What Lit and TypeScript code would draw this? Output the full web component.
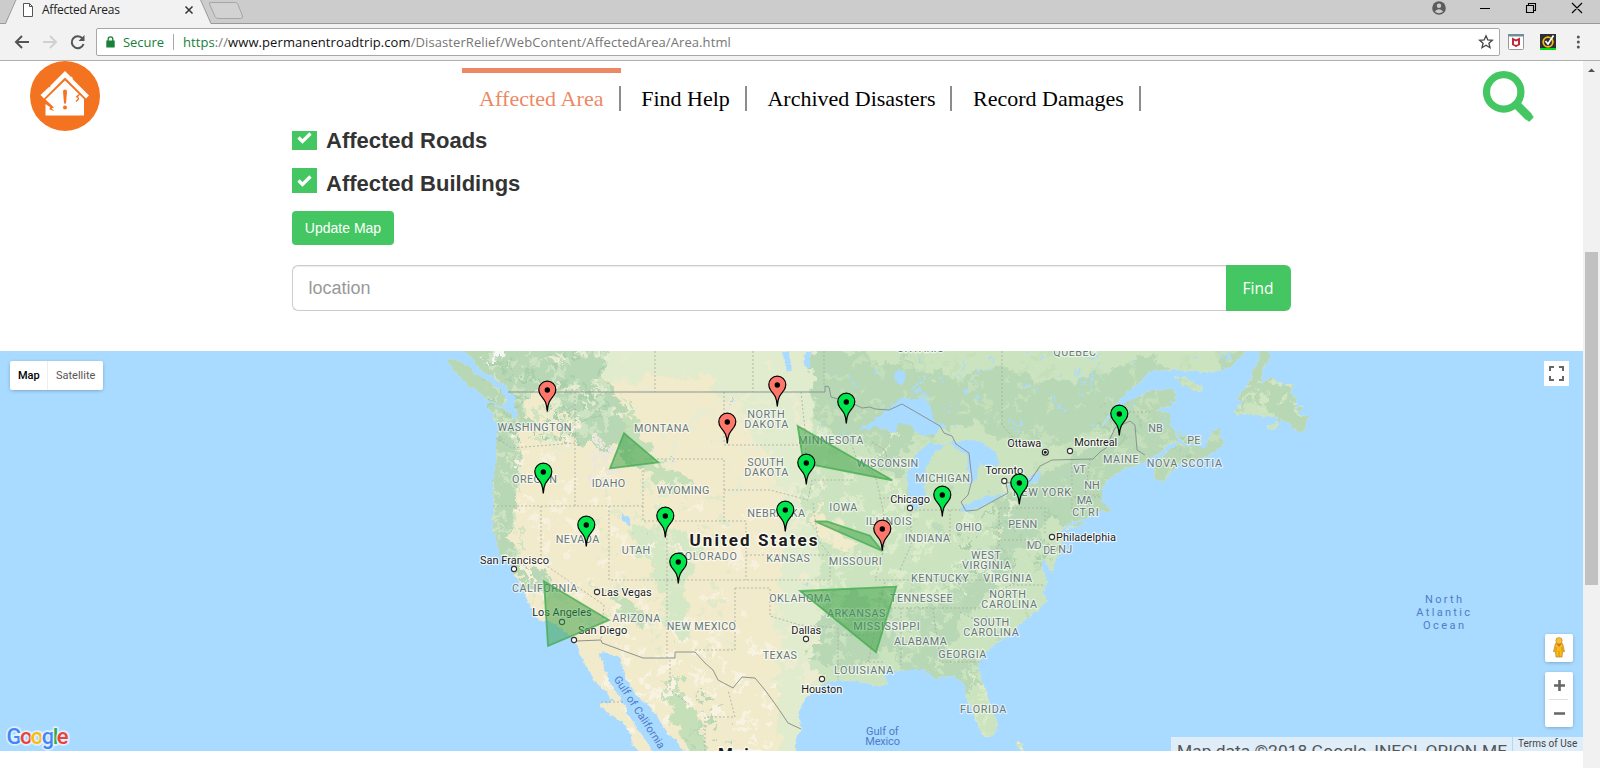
import { LitElement, html, svg, css } from "lit";
import { customElement } from "lit/decorators.js";

type Label = [string, number, number, number];

/* text, left, right, baseline */
const STATES: Label[] = [
  ["WASHINGTON", 497.5, 571.5, 430.7], ["OREGON", 512, 557, 482.7], ["IDAHO", 591.7, 625.3, 486.7],
  ["MONTANA", 634, 689, 431.7], ["WYOMING", 656.7, 709.3, 494.3], ["NEVADA", 555.7, 599.3, 543.3],
  ["UTAH", 621.7, 650.3, 553.7], ["COLORADO", 677, 737, 559.7], ["NORTH", 747.3, 784.7, 418.3],
  ["DAKOTA", 744.3, 788.3, 428.3], ["MINNESOTA", 798.3, 863.3, 443.7], ["SOUTH", 747.3, 783.7, 466.3],
  ["DAKOTA", 744.3, 788.3, 476.3], ["WISCONSIN", 856.7, 918.3, 467.3], ["MICHIGAN", 915.3, 970, 482.3],
  ["IOWA", 829.3, 857.3, 510.7], ["NEBRASKA", 747.3, 805, 517.3], ["ILLINOIS", 865.7, 911.7, 525.3],
  ["OHIO", 955.3, 982, 531.3], ["INDIANA", 904.7, 950, 542.3], ["NEW YORK", 1013, 1071, 496.3],
  ["PENN", 1008.3, 1037.3, 527.7], ["MD", 1026.7, 1041.7, 549.3], ["DE", 1043.3, 1056, 554.3],
  ["NJ", 1058.3, 1072.3, 552.7], ["MAINE", 1103, 1138.7, 463.3], ["VT", 1073.3, 1086, 472.7],
  ["NH", 1084.3, 1099.7, 488.7], ["MA", 1076.7, 1092.3, 504.3], ["CT", 1072.3, 1086, 516.3], ["RI", 1088, 1098.7, 516.3],
  ["NB", 1148.3, 1162.7, 431.7], ["PE", 1187.3, 1200.3, 444], ["NOVA SCOTIA", 1146.7, 1222, 467.3],
  ["QUEBEC", 1053.3, 1096, 355.7], ["ONTARIO", 896.7, 944.3, 352], ["CALIFORNIA", 512, 577.3, 591.7],
  ["ARIZONA", 612.3, 660.3, 621.7], ["NEW MEXICO", 666.7, 736, 629.7], ["KANSAS", 766.3, 810, 562.3],
  ["MISSOURI", 828.7, 881.7, 565.3], ["WEST", 971, 1000.7, 558.7], ["VIRGINIA", 962, 1010.7, 568.7],
  ["KENTUCKY", 911, 968.7, 581.7], ["VIRGINIA", 983.3, 1032, 581.7], ["OKLAHOMA", 769.3, 830.7, 602.3],
  ["TENNESSEE", 890, 952.7, 602.3], ["NORTH", 989.3, 1026, 598.3], ["CAROLINA", 981.3, 1037, 608.3],
  ["ARKANSAS", 827, 885.3, 616.7], ["MISSISSIPPI", 853.3, 919.7, 630.3], ["SOUTH", 973.3, 1009.3, 626.3],
  ["CAROLINA", 963.3, 1018.7, 636.3], ["ALABAMA", 894, 946.7, 645.3], ["GEORGIA", 938.3, 986.3, 658.3],
  ["TEXAS", 762.7, 797, 659.3], ["LOUISIANA", 834, 893.3, 674.3], ["FLORIDA", 960, 1006.3, 713.3],
];

const CITIES: Label[] = [
  ["Chicago", 890.2, 930, 502.7], ["Toronto", 985.3, 1023.3, 474.3], ["Ottawa", 1007.3, 1041.3, 446.7],
  ["Montreal", 1074.2, 1117.3, 445.7], ["Philadelphia", 1056, 1116, 540.7], ["San Francisco", 480, 549, 563.7],
  ["Las Vegas", 601.2, 651.7, 595.7], ["Los Angeles", 532.2, 591.7, 616], ["San Diego", 578, 627.3, 634],
  ["Dallas", 791.2, 821.3, 633.7], ["Houston", 801.2, 842.3, 692.7],
];

const WATERS: Label[] = [
  ["Gulf of", 866, 898.7, 734.6], ["Mexico", 865.2, 900, 744.8],
  ["North", 1425, 1462, 603], ["Atlantic", 1416.3, 1470, 616], ["Ocean", 1423, 1464, 629],
];

const DOTS = [[910, 508], [1004.3, 481], [1070, 451], [1052, 537], [514, 569], [597, 592], [562, 622], [574, 640], [806, 639], [822, 679]];

const RED = "#ff776b";
const GREEN = "#00e64d";
const PINS: [number, number, string][] = [
  [777.3, 407, RED], [547.3, 412, RED], [846.3, 424, GREEN], [1119.3, 436, GREEN], [727.3, 444, RED],
  [806.3, 485, GREEN], [543.3, 494, GREEN], [1019.3, 505, GREEN], [942.3, 517, GREEN], [785.3, 532, GREEN],
  [665.3, 538, GREEN], [586.3, 547, GREEN], [882.3, 551, RED], [678.3, 584, GREEN],
];

const ZONES = [
  "624,433.3 658.3,462.3 610,468.3",
  "797.7,426 892.3,480.3 803.5,463",
  "814.7,521.3 827,521.5 870,535.7 882.3,551",
  "544,581.3 609,620 548,646",
  "800.3,591 896.3,586.7 876,652.3",
];

const MAINLAND =
  "M453,345 473,358 480,370 493,377 507,388 514,398 517,420 511,415 503,408 487,403 493,415 498,428 497,448 495,465 493,488 494,506 492,525 497,545 500,555 513,565 513,573 518,580 523,592 530,605 533,612 540,620 553,622 560,627 570,635 577,645 582,658 590,672 593,680 607,692 613,702 608,703 600,705 610,715 623,722 630,735 633,745 643,755 655,755 647,742 637,728 627,712 617,692 607,678 602,662 598,652 607,653 620,658 625,678 637,695 647,705 657,715 663,728 677,742 687,755 795,755 797,737 802,728 798,715 802,702 813,692 823,683 837,680 853,681 870,684 880,687 888,683 887,677 880,673 893,671 910,670 923,670 937,678 953,675 963,683 967,698 975,718 983,735 990,738 995,732 996,718 988,698 982,682 978,668 983,655 997,642 1013,632 1023,622 1030,615 1040,610 1046,601 1043,592 1047,580 1043,570 1042,556 1047,563 1052,573 1055,562 1061,552 1063,543 1061,532 1068,523 1080,519 1092,517 1099,511 1110,512 1108,506 1102,502 1102,492 1104,484 1112,476 1127,468 1143,463 1158,453 1170,444 1178,442 1175,432 1170,425 1170,413 1155,410 1163,407 1173,406 1177,395 1170,389 1153,390 1130,400 1113,413 1102,428 1106,416 1123,396 1140,382 1150,371 1180,370 1207,372 1223,370 1233,365 1243,355 1252,345Z";
const ISLANDS = [
  "M446,360 455,359 467,366 482,378 500,389 508,400 502,407 488,400 470,386 457,374Z",
  "M1168,450 1178,444 1197,447 1207,447 1212,432 1220,427 1220,438 1225,442 1213,453 1197,461 1177,465 1163,481 1155,479 1153,469 1160,459Z",
  "M1177,428 1182,434 1190,437 1201,438 1204,442 1190,444 1180,440Z",
  "M1173,376 1187,378 1203,388 1198,391 1185,386Z",
  "M1263,345 1271,355 1263,370 1260,385 1272,376 1276,382 1284,384 1294,384 1289,393 1297,398 1294,409 1304,405 1298,415 1308,416 1305,430 1299,432 1292,427 1287,422 1275,417 1264,416 1252,414 1235,415 1233,411 1243,402 1237,400 1247,386 1256,365Z",
  "M1068,526 1085,521 1083,525 1066,529Z",
  "M1268,428 1280,418 1281,422 1274,429Z",
  "M1016,740 1023,745 1023,751 1017,746Z",
];

const LAKES = [
  "858,431 873,420 887,410 902,397 912,400 923,396 930,405 933,418 943,428 935,435 920,435 910,425 900,424 893,432 877,427 864,430",
  "910,501 907,482 911,462 918,452 930,443 945,445 935,452 927,466 924,484 925,498 918,509 911,507",
  "947,443 963,440 983,442 996,455 1000,463 990,468 979,463 977,478 970,485 967,472 968,455 960,450",
  "960,508 970,502 987,497 1007,493 993,501 970,512 962,511",
  "1008,488 1012,481 1030,477 1042,470 1038,481 1024,486",
  "894,375 900,369 906,374 903,385 897,384",
  "782,351 789,353 792,370 786,371",
  "805,352 811,352 809,369 804,365",
  "621,512 629,517 631,526 624,522",
  "963,391 968,388 966,397",
];

/* Land cover painted over the base colour: [fill, points] */
const COVER: [string, string][] = [
  ["#e1ebcd", "590,335 840,335 830,560 822,770 782,770 778,690 775,600 788,520 770,470 740,410 700,376 610,382"],
  ["#cbe4bf", "815,330 1340,330 1340,480 1140,560 1000,770 930,700 830,710 812,660 825,600 818,540 802,500 812,430"],
  ["#b7d7b5", "430,335 603,335 607,380 622,405 632,440 650,458 640,472 610,440 596,452 580,440 574,414 550,400 540,384 525,400 528,425 518,440 520,480 513,510 512,540 520,562 545,570 552,592 538,592 515,580 480,550 480,420 430,380"],
  ["#b7d7b5", "811,342 858,352 885,366 905,356 925,372 960,378 1000,366 1060,385 1150,355 1200,395 1240,430 1240,480 1140,490 1110,530 1050,520 1000,522 990,505 1020,488 1060,460 1040,440 1010,446 980,425 945,425 900,448 905,480 880,470 868,440 840,440 815,415"],
  ["#b7d7b5", "1225,335 1300,335 1330,380 1330,450 1295,440 1275,414 1262,402 1235,412 1228,425 1215,410"],
  ["#cbe4bf", "1000,342 1110,342 1090,372 1060,380 1050,362 1012,372"],
  ["#cbe4bf", "1020,470 1050,450 1100,435 1120,410 1106,436 1088,452 1040,466"],
  ["#b7d7b5", "1010,515 1040,505 1052,515 1030,540 1010,560 1000,580 980,600 960,615 950,610 965,585 985,560 1000,530"],
  ["#b7d7b5", "822,602 850,592 888,600 893,640 880,660 850,668 823,665 812,655"],
  ["#b7d7b5", "890,640 960,650 990,662 986,690 960,690 900,684 893,660"],
  ["#b7d7b5", "910,592 960,588 980,600 950,640 925,640 905,620"],
  ["#f1eacb", "815,500 822,512 840,532 858,545 838,550 815,535"],
  ["#d4e8c6", "630,530 650,522 690,535 700,560 685,585 690,640 672,640 665,600 650,570"],
  ["#c5dfb9", "664,675 680,680 690,705 705,735 715,751 690,751 675,730 668,705"],
  ["#c5dfb9", "600,590 632,600 650,620 640,632 620,612"],
  ["#c5dfb9", "625,395 650,450 672,470 690,480 680,498 655,480 630,455"],
];

const BORDERS = [
  "M508,392H825V386L829,387 831,397 852,403 862,408 870,407 875,409 889,410 902,404 940,426 944,433 952,436 956,444 969,453 972,480 968,495 961,502 966,511 977,510 1008,493 1006,483 1030,481 1040,466 1052,460 1093,459 1100,452 1106,448 1115,428 1130,421 1135,425 1137,450 1145,455",
  "M576,641 601,640 602,643 643,658H675V652H695L705,663 713,670 718,680 733,688 742,677 755,678 765,690 778,708 788,723 801,729",
];
const STATE_LINES =
  "M575,392V506M541,506V562L604,605 601,640M493,506H643M609,506V580M496,438 512,448 550,445 575,443M643,466V521H667V580H609M667,521H724V459H643M724,392V444M655,351V392M753,351V392M824,351V386M724,445H803M667,580H830M724,490H770L808,500 812,480H853M724,521H746V555H830V580M746,555V580M735,588H770V616L800,625 838,628V680M735,588V650H695M667,580V658M801,392 805,430 806,482M813,503 818,540 830,555M850,440 857,460 875,475 880,495 885,520 885,545 875,580H990M838,635H870M865,662H885M885,582 878,610 873,640 868,662M901,608V665M933,608 940,662H982M890,608H980M911,510V545L900,570M911,510H960M950,510V545M999,508V545L985,565M1000,508H1045V535M1000,540H1045M985,600 1010,585 1045,585M1002,351V425L1020,445M1072,459V512M1090,459 1085,495H1100M1070,497H1100M872,442 885,450 890,470M879,498H905M980,622 960,612M1125,412H1150M601,702H625M705,751V717H735L728,690M670,660V690L690,705";

function makeRandom(seed: number) {
  let s = seed;
  return () => {
    s = (s * 16807) % 2147483647;
    return s / 2147483647;
  };
}

/* Small irregular patches: x, y, width, height, count, max radius, fill */
const PATCHES: [number, number, number, number, number, number, string][] = [
  [490, 351, 120, 90, 90, 5, "#cde3c1"], [490, 351, 110, 90, 70, 4, "#a9cfac"], [535, 351, 90, 110, 40, 5, "#e6ecd0"],
  [492, 440, 30, 120, 40, 4, "#cde3c1"], [515, 430, 100, 110, 26, 5, "#f6f0dc"], [520, 500, 250, 150, 80, 6, "#f6f0dc"],
  [600, 470, 130, 180, 60, 5, "#e1e9cb"], [590, 440, 30, 50, 26, 4, "#ebe7df"], [600, 640, 180, 110, 60, 6, "#f8f2e1"],
  [620, 370, 180, 120, 40, 6, "#e9ecd0"], [730, 351, 90, 350, 60, 6, "#edecd0"], [800, 430, 100, 160, 60, 6, "#dcebcb"],
  [820, 351, 420, 100, 110, 6, "#c4dfba"], [820, 351, 420, 80, 60, 3, "#a9daff"], [820, 590, 180, 90, 80, 6, "#c9e3be"],
  [890, 490, 120, 110, 50, 6, "#dcebc9"], [890, 490, 160, 160, 60, 5, "#bddbb8"], [960, 510, 100, 70, 50, 4, "#accfac"],
  [1030, 430, 190, 60, 50, 4, "#c4dfba"], [960, 670, 40, 70, 26, 4, "#dbeac4"], [1235, 375, 75, 55, 20, 5, "#d3e6c2"],
  [482, 351, 20, 12, 4, 4, "#f7f7f5"], [530, 570, 80, 60, 26, 4, "#dce7c8"], [680, 690, 50, 60, 24, 3, "#b7d7b5"],
  [620, 360, 480, 250, 36, 1.6, "#a3d4f7"], [1100, 400, 90, 60, 18, 4, "#accfac"],
];

const rand = makeRandom(4217);
const patchShapes = PATCHES.map(([x, y, w, h, n, r, fill]) => {
  let d = "";
  for (let i = 0; i < n; i++) {
    const cx = x + rand() * w;
    const cy = y + rand() * h;
    const pts: string[] = [];
    for (let k = 0; k < 7; k++) {
      const a = (k / 7) * Math.PI * 2;
      const rr = r * (0.3 + rand() * 0.9);
      pts.push(`${(cx + Math.cos(a) * rr).toFixed(1)},${(cy + Math.sin(a) * rr * 0.85).toFixed(1)}`);
    }
    d += `M${pts.join(" ")}Z`;
  }
  return { d, fill };
});

const label = (cls: string) => ([t, l, r, y]: Label) =>
  svg`<text class=${cls} x=${l} y=${y} textLength=${r - l}>${t}</text>`;

@customElement("relief-map")
class ReliefMap extends LitElement {
  static styles = css`
    :host { display: block; position: relative; height: 400px; overflow: hidden; background: #a9daff; font-family: Roboto, sans-serif; }
    .canvas { display: block; width: 1583px; height: 400px; }
    text { font-family: Roboto, sans-serif; paint-order: stroke; stroke-linejoin: round; }
    .state { font-size: 10.8px; fill: #687879; stroke: rgba(255,255,255,.6); stroke-width: 2.4px; }
    .city { font-size: 11px; fill: #1c1c1c; stroke: rgba(255,255,255,.7); stroke-width: 2.4px; }
    .water { font-size: 11px; fill: #4f7cc8; }
    .country { font-size: 17px; font-weight: 700; fill: #1b1b1b; stroke: rgba(255,255,255,.7); stroke-width: 3px; }
    .types { position: absolute; left: 10px; top: 10px; display: flex; height: 29px; background: #fff; border-radius: 2px; box-shadow: 0 1px 4px -1px rgba(0,0,0,.35); font-size: 11px; line-height: 29px; color: #565656; }
    .type { padding: 0 8px; }
    .type.on { width: 38px; box-sizing: border-box; font-weight: 500; color: #000; border-right: 1px solid #eee; }
    .full { position: absolute; left: 1544px; top: 10px; width: 25px; height: 25px; background: #fff; }
    .side { position: absolute; left: 1545px; top: 283px; display: flex; flex-direction: column; gap: 10px; }
    .box { width: 28px; background: #fff; border-radius: 2px; box-shadow: 0 1px 4px -1px rgba(0,0,0,.35); }
    .box svg, .full svg { display: block; }
    .legal { position: absolute; right: 0; bottom: 0; display: flex; gap: 1px; height: 14px; overflow: hidden; color: #444; }
    .data, .terms { background: rgba(245,245,245,.7); overflow: hidden; white-space: nowrap; }
    .data { width: 341px; box-sizing: border-box; padding-left: 6px; font-size: 17.4px; line-height: 28px; color: #555; }
    .terms { width: 70px; box-sizing: border-box; padding-left: 5px; font-size: 10px; line-height: 14px; }
    .brand { position: absolute; left: 0; bottom: 0; }
    .g { font-size: 22px; font-weight: 500; stroke: rgba(255,255,255,.6); stroke-width: 3.5px; }
  `;

  render() {
    return html`
      <svg class="canvas" viewBox="0 351 1583 400">
        <defs>
          <clipPath id="land"><path d=${MAINLAND} />${ISLANDS.map((d) => svg`<path d=${d} />`)}</clipPath>
          <filter id="rough" filterUnits="userSpaceOnUse" x="420" y="330" width="920" height="440">
            <feTurbulence type="fractalNoise" baseFrequency="0.07" numOctaves="4" seed="8" />
            <feDisplacementMap in="SourceGraphic" scale="26" xChannelSelector="R" yChannelSelector="G" />
          </filter>
          <filter id="shore" filterUnits="userSpaceOnUse" x="420" y="330" width="920" height="440">
            <feTurbulence type="fractalNoise" baseFrequency="0.18" numOctaves="3" seed="3" />
            <feDisplacementMap in="SourceGraphic" scale="6" xChannelSelector="R" yChannelSelector="G" />
          </filter>
        </defs>
        <g filter="url(#shore)">
          <g clip-path="url(#land)">
            <rect x="430" y="340" width="900" height="420" fill="#f1eacb" />
            <g filter="url(#rough)">
              ${COVER.map(([f, p]) => svg`<polygon fill=${f} points=${p} />`)}
              ${patchShapes.map((p) => svg`<path d=${p.d} fill=${p.fill} />`)}
            </g>
          </g>
          ${LAKES.map((p) => svg`<polygon fill="#a9daff" points=${p} />`)}
        </g>
        <path d=${STATE_LINES} fill="none" stroke="#a9aba0" stroke-width="1" stroke-dasharray="2 2" opacity=".8" />
        ${BORDERS.map((d) => svg`<path d=${d} fill="none" stroke="#8c9590" stroke-width="1" />`)}
        ${STATES.map(label("state"))}
        ${CITIES.map(label("city"))}
        ${WATERS.map(label("water"))}
        <text class="water" transform="translate(613.500,679) rotate(57)" textLength="84">Gulf of California</text>
        <text class="country" x="689.5" y="546" textLength="128">United States</text>
        <text class="country" x="718" y="760" textLength="45">Mexico</text>
        ${DOTS.map(([x, y]) => svg`<circle cx=${x} cy=${y} r="2.6" fill="#fff" stroke="#333" stroke-width="1.1" />`)}
        <circle cx="1045.3" cy="452.3" r="3" fill="#fff" stroke="#222" stroke-width="1.1" /><circle cx="1045.3" cy="452.3" r="1.5" fill="#222" />
        ${ZONES.map((p) => svg`<polygon points=${p} fill="#38a042" fill-opacity=".5" stroke="#46ad50" stroke-opacity=".8" stroke-width="1.8" />`)}
        ${PINS.map(([x, y, c]) => svg`<g transform="translate(${x},${y})">
          <path d="M0,-.5C-.6,-10.500-3.300,-12.500-6.500,-16.500C-8,-18.400-8.500,-20.300-8.500,-22.400A8.500,8.500 0 0 1 8.500,-22.400C8.500,-20.300 8,-18.400 6.500,-16.500C3.300,-12.500 .6,-10.500 0,-.5Z" fill=${c} stroke="#000" stroke-width="1.2" />
          <circle cx="0" cy="-22" r="2.7" fill="#000" /></g>`)}
      </svg>
      <div class="types"><div class="type on">Map</div><div class="type">Satellite</div></div>
      <div class="full"><svg width="25" height="25" fill="none" stroke="#666" stroke-width="2"><path d="M6,10V6H10M15,6H19V10M19,15V19H15M10,19H6V15" /></svg></div>
      <div class="side">
        <div class="box"><svg width="28" height="28">
          <path d="M10.500,9.500H17.500L19.500,17.500 17.500,18 17,23H11L10.500,18 8.500,17.500Z" fill="#fbb917" stroke="#a8843c" stroke-width=".7" />
          <path d="M11.500,10 14,13 16.500,10Z" fill="#e8711a" /><path d="M14,17V22.500M11,13V17.500M17,13V17.500" stroke="#c98a10" stroke-width=".8" />
          <circle cx="14" cy="6.800" r="3.200" fill="#fdbf2d" stroke="#a8843c" stroke-width=".6" /></svg></div>
        <div class="box"><svg width="28" height="55"><path d="M9,13.500H20M14.500,8V19M9,41.500H20" stroke="#666" stroke-width="2.600" /><path d="M4,27.500H23" stroke="#e0e0e0" /></svg></div>
      </div>
      <svg class="brand" width="90" height="40"><text class="g" x="6.500" y="33" textLength="62"><tspan fill="#4285f4">G</tspan><tspan fill="#ea4335">o</tspan><tspan fill="#fbbc05">o</tspan><tspan fill="#4285f4">g</tspan><tspan fill="#34a853">l</tspan><tspan fill="#ea4335">e</tspan></text></svg>
      <div class="legal"><div class="data">Map data ©2018 Google, INEGI, ORION-ME</div><div class="terms">Terms of Use</div></div>
    `;
  }
}

@customElement("browser-chrome")
class BrowserChrome extends LitElement {
  static styles = css`
    :host { display: block; height: 61px; font-family: "Open Sans", "Noto Sans", sans-serif; }
    .strip { display: flex; height: 24px; background: #ccc; position: relative; }
    .strip svg { display: block; }
    .title { position: absolute; left: 42px; top: 0; font-size: 12px; line-height: 20px; letter-spacing: -.25px; color: #222; }
    .bar { display: flex; align-items: center; height: 36px; background: #f2f2f2; border-bottom: 1px solid #b0b0b0; }
    .nav { flex: none; width: 96px; height: 36px; }
    .omni { box-sizing: border-box; width: 1404px; height: 28px; display: flex; align-items: center; background: #fff; border: 1px solid #a8a8a8; border-radius: 2px; font-size: 13px; padding-left: 9px; }
    .secure { color: #188038; margin-left: 8px; width: 50px; letter-spacing: -.05px; }
    .rule { width: 1px; height: 16px; background: #aaa; margin-right: 9px; }
    .url { color: #767676; white-space: nowrap; letter-spacing: .09px; flex: 1; }
    .url .s { color: #188038; }
    .url .h { color: #111; }
    .star { margin-right: 5px; }
  `;

  render() {
    return html`
      <div class="strip">
        <svg width="1600" height="24" fill="none">
          <path d="M0,23.500H5.500L16,0H200.500L211,23.500H1600" stroke="#999" />
          <path d="M6,24 16.500,0H200L210.500,24Z" fill="#f2f2f2" />
          <path d="M210,2.500H235.500Q237,2.500 238,4.500L242.500,16Q243,18.500 240.500,18.500H218Q216,18.500 215,16.500L209.500,4Q209,2.500 210,2.500Z" fill="#d2d2d2" stroke="#a6a6a6" />
          <path d="M23.500,3.500H29.500L32.500,6.500V16.500H23.500ZM29.500,3.500V6.500H32.500" fill="#fff" stroke="#555" />
          <path d="M185.500,6.500 192.500,13.500M192.500,6.500 185.500,13.500" stroke="#333" stroke-width="1.500" />
          <circle cx="1439" cy="8" r="6.800" fill="#5c5c5c" /><circle cx="1439" cy="5.700" r="2.200" fill="#ccc" /><path d="M1434.800,11.500Q1439,7 1443.200,11.500Q1439,15 1434.800,11.500Z" fill="#ccc" />
          <path d="M1480,8.500H1490M1526.500,5.500H1533.500V12.500H1526.500ZM1528.500,5V3.500H1535.500V10.500H1534M1572,3 1582,13M1582,3 1572,13" stroke="#000" stroke-width="1.100" />
        </svg>
        <div class="title">Affected Areas</div>
      </div>
      <div class="bar">
        <svg class="nav" width="96" height="36" fill="none" stroke-width="2">
          <path d="M29,18H16.500M22,12 16,18 22,24" stroke="#555" />
          <path d="M43,18H55.500M50,12 56,18 50,24" stroke="#d0d0d0" />
          <path d="M82.500,14.500A6,6 0 1 0 83.500,20" stroke="#555" /><path d="M84.500,11V17H78.500Z" fill="#555" />
        </svg>
        <div class="omni">
          <svg width="9" height="12"><path d="M.3,4.500H8.700V11.500H.3Z" fill="#188038" /><path d="M2.200,5V3A2.300,2.200 0 0 1 6.800,3V5" fill="none" stroke="#188038" stroke-width="1.300" /></svg>
          <div class="secure">Secure</div><div class="rule"></div>
          <div class="url"><span class="s">https</span>://<span class="h">www.permanentroadtrip.com</span>/DisasterRelief/WebContent/AffectedArea/Area.html</div>
          <svg class="star" width="16" height="16"><path d="M8,1.800 9.800,6 14.300,6.300 10.900,9.200 12,13.700 8,11.300 4,13.700 5.100,9.200 1.700,6.300 6.200,6Z" fill="none" stroke="#444" stroke-width="1.300" /></svg>
        </div>
        <svg width="100" height="36">
          <rect x="8.500" y="10.500" width="15" height="15" rx="1" fill="#fff" stroke="#999" /><path d="M8,10H24V12.500H8Z" fill="#6f8e9b" />
          <path d="M13,15 16,16.500 19,15V20.500L16,22 13,20.500Z" fill="none" stroke="#c01f2e" stroke-width="1.900" />
          <path d="M40,10H56V24H40Z" fill="#2d3033" /><path d="M40,24H56V26H40Z" fill="#0d1" /><circle cx="48" cy="18" r="4.800" fill="none" stroke="#fdb913" stroke-width="1.800" /><path d="M45.500,17 48,20 53.500,11.500" fill="none" stroke="#fff" stroke-width="1.700" />
          <circle cx="78.300" cy="13" r="1.500" fill="#555" /><circle cx="78.300" cy="18" r="1.500" fill="#555" /><circle cx="78.300" cy="23" r="1.500" fill="#555" />
        </svg>
      </div>
    `;
  }
}

@customElement("app-root")
class AppRoot extends LitElement {
  static styles = css`
    :host { display: block; width: 1600px; height: 768px; overflow: hidden; background: #fff; font-family: "Liberation Sans", Arial, sans-serif; }
    .body { display: flex; height: 707px; }
    .page { width: 1583px; overflow: hidden; }
    .scroll { width: 17px; background: #f1f1f1; }
    .scroll svg { display: block; }
    header { display: flex; height: 70px; align-items: flex-start; }
    .logo { margin-left: 30px; }
    nav { display: flex; margin-left: 362px; width: 1021px; gap: 4px; font: 22px/25px "Liberation Serif", "Times New Roman", serif; color: #000; }
    .item { height: 43px; margin-top: 7px; box-sizing: border-box; border-top: 5px solid transparent; padding-top: 13px; white-space: nowrap; }
    .item span { display: block; padding: 0 15px 0 16.6px; border-right: 2px solid #8c8c8c; height: 25px; line-height: 25px; }
    .item.on { color: #ed8865; border-top-color: #ed8865; }
    .item.on span { padding: 0 15px 0 17px; letter-spacing: .08px; }
    .find-icon { margin-top: 10px; }
    .form { padding: 0 292px; height: 220px; box-sizing: border-box; }
    .row { display: flex; height: 43px; overflow: hidden; }
    .row.first { height: 31px; align-items: flex-start; margin-bottom: 6px; }
    .check { flex: none; width: 25px; height: 25px; background: #44c762; margin-right: 9px; }
    .first .check { margin-top: -6px; }
    .check svg { display: block; }
    .name { font-size: 22px; font-weight: 700; line-height: 26px; color: #333; }
    .first .name { margin-top: -3px; }
    .row:not(.first) .name { margin-top: 3px; }
    .update { width: 102px; height: 34px; border-radius: 4px; background: #44c762; color: #fff; font-size: 14px; line-height: 34px; text-align: center; }
    .search { display: flex; width: 999px; height: 46px; margin-top: 20px; }
    .input { flex: 1; box-sizing: border-box; border: 1px solid #ccc; border-right: 0; border-radius: 6px 0 0 6px; padding-left: 15.5px; font-size: 18px; line-height: 45px; color: #999; box-shadow: inset 0 1px 1px rgba(0,0,0,.075); }
    .go { width: 65px; box-sizing: border-box; padding-right: 1px; border-radius: 0 6px 6px 0; background: #44c762; color: #fff; text-align: center; font: 15.500px/46px "Open Sans", sans-serif; }
  `;

  render() {
    const tick = html`<svg width="25" height="25"><path d="M6.500,12.500 10.500,16.500 18.500,8.500" fill="none" stroke="#fff" stroke-width="3.200" /></svg>`;
    return html`
      <browser-chrome></browser-chrome>
      <div class="body">
        <div class="page">
          <header>
            <svg class="logo" width="70" height="70">
              <circle cx="35" cy="35" r="35" fill="#f47321" />
              <path d="M35,10 41,16 42,15.500 43,18.500 59,34.500 56,37.500 35,16.500 14,37.500 10.500,34 19,26 20,26.500 20.500,24.500Z" fill="#fff" />
              <path d="M35,19.500 54,38V54.500H15.500V43L20,46 19.500,48.500 24.500,50 21.500,47.500 24,46.500 15.500,38.500Z" fill="#fff" />
              <path d="M50,33 47.500,35 48.500,38 46,40.500M46,35.500 48,36.500" fill="none" stroke="#f47321" stroke-width="1.300" />
              <path d="M33,30.500A2,2 0 0 1 37,30.500L36,42.500H34Z" fill="#f47321" /><circle cx="35" cy="46.500" r="2" fill="#f47321" />
            </svg>
            <nav>
              <div class="item on"><span>Affected Area</span></div>
              <div class="item"><span>Find Help</span></div>
              <div class="item"><span>Archived Disasters</span></div>
              <div class="item"><span>Record Damages</span></div>
            </nav>
            <svg class="find-icon" width="52" height="52"><circle cx="20.700" cy="20.900" r="17.200" fill="none" stroke="#44c762" stroke-width="7.200" /><path d="M32,32 46,46" stroke="#44c762" stroke-width="8.400" /><path d="M43.500,46.500 46.500,43.500 49,46 46,49Z" fill="#44c762" stroke="#44c762" stroke-width="3" stroke-linejoin="round" /></svg>
          </header>
          <div class="form">
            <div class="row first"><div class="check">${tick}</div><div class="name">Affected Roads</div></div>
            <div class="row"><div class="check">${tick}</div><div class="name">Affected Buildings</div></div>
            <div class="update">Update Map</div>
            <div class="search"><div class="input">location</div><div class="go">Find</div></div>
          </div>
          <relief-map></relief-map>
        </div>
        <div class="scroll"><svg width="17" height="707"><path d="M5,11 8.500,7.500 12,11Z" fill="#505050" /><rect x="2" y="191" width="13" height="333" fill="#c1c1c1" /></svg></div>
      </div>
    `;
  }
}
